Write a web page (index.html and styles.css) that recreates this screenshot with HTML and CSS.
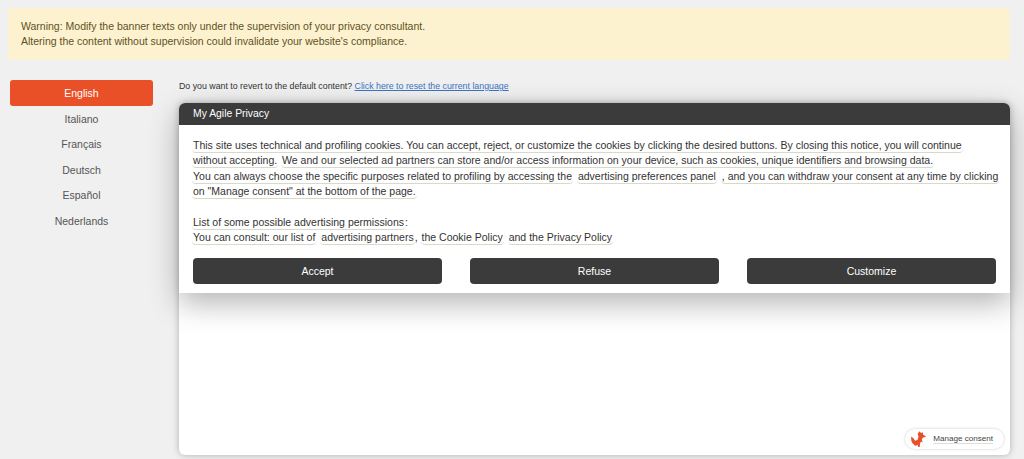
FILE: index.html
```html
<!DOCTYPE html>
<html lang="en">
<head>
<meta charset="utf-8">
<title>My Agile Privacy</title>
<link rel="stylesheet" href="styles.css">
</head>
<body>
<div class="warning">
  <p>Warning: Modify the banner texts only under the supervision of your privacy consultant.</p>
  <p>Altering the content without supervision could invalidate your website's compliance.</p>
</div>
<div class="layout">
  <nav class="langs">
    <a class="lang active">English</a>
    <a class="lang">Italiano</a>
    <a class="lang">Français</a>
    <a class="lang">Deutsch</a>
    <a class="lang">Español</a>
    <a class="lang">Nederlands</a>
  </nav>
  <main class="main">
    <p class="revert">Do you want to revert to the default content? <a href="#">Click here to reset the current language</a></p>
    <section class="preview">
      <div class="banner">
        <div class="banner-title">My Agile Privacy</div>
        <div class="banner-body">
          <div class="copy">
            <div class="line"><span class="ed">This site uses technical and profiling cookies. You can accept, reject, or customize the cookies by clicking the desired buttons. By closing this notice, you will continue</span></div>
            <div class="line"><span class="ed">without accepting.</span> <span class="ed">We and our selected ad partners can store and/or access information on your device, such as cookies, unique identifiers and browsing data.</span></div>
            <div class="line"><span class="ed">You can always choose the specific purposes related to profiling by accessing the</span> <span class="ed ml">advertising preferences panel</span> <span class="ed ml">, and you can withdraw your consent at any time by clicking</span></div>
            <div class="line"><span class="ed">on "Manage consent" at the bottom of the page.</span></div>
            <div class="line blank"></div>
            <div class="line"><span class="ed">List of some possible advertising permissions</span>:</div>
            <div class="line"><span class="ed">You can consult: our list of</span> <span class="ed ml">advertising partners</span>, <span class="ed">the Cookie Policy</span> <span class="ed ml">and the Privacy Policy</span></div>
          </div>
          <div class="actions">
            <button class="btn">Accept</button>
            <button class="btn">Refuse</button>
            <button class="btn">Customize</button>
          </div>
        </div>
      </div>
      <div class="consent">
        <svg class="fox" viewBox="0 0 20 18" aria-hidden="true">
          <path d="M11 0l2 2 2-1 .5 3 3.500 2-4 1.500-1 2.500 1 3-2-1-1.500 3 .5 3H9l.5-2-3.500 1-3-3C1.500 12 1 9 1.500 6L4 8l2 3 3-1 1-4-1-3z" fill="#e8502a"/>
        </svg>
        <span class="consent-label">Manage consent</span>
      </div>
    </section>
  </main>
</div>
</body>
</html>
```
FILE: styles.css
```css
* { box-sizing: border-box; }
html, body { height: 100%; }
body {
  margin: 0;
  height: 459px;
  overflow: hidden;
  background: #f0f0f0;
  color: #333;
  font-family: "Liberation Sans", Arial, sans-serif;
  padding: 8px 14px 0 8px;
}
p { margin: 0; }
.warning {
  height: 52px;
  padding: 11px 13px;
  background: #fdf2d0;
  border-radius: 4px;
  color: #5f5122;
  font-size: 10.5px;
  line-height: 15px;
}
.layout { display: flex; margin-top: 20px; align-items: flex-start; }
.langs { width: 145px; padding-left: 2px; flex: none; }
.lang {
  display: block;
  height: 25.6px;
  line-height: 26px;
  text-align: center;
  font-size: 10.5px;
  color: #555;
  border-radius: 3px;
}
.lang.active { background: #e95028; color: #fff; }
.main { margin-left: 26px; flex: 1; min-width: 0; }
.revert { font-size: 8.8px; line-height: 12px; color: #333; margin-bottom: 11px; }
.revert a { color: #3a74c4; }
.preview {
  position: relative;
  height: 352px;
  background: #fff;
  border-radius: 6px;
  box-shadow: 0 0 7px rgba(0,0,0,.28);
}
.banner {
  background: #fff;
  border-radius: 6px 6px 0 0;
  box-shadow: 0 10px 30px rgba(0,0,0,.3);
}
.banner-title {
  height: 22px;
  padding: 0 14px;
  line-height: 22px;
  background: #3b3b3b;
  color: #fff;
  font-size: 10.4px;
  border-radius: 6px 6px 0 0;
}
.banner-body { padding: 13px 14px 10px 13px; height: 168px; }
.copy { font-size: 10.53px; line-height: 15.4px; color: #333; white-space: nowrap; }
.line { height: 15.4px; }
.ed { border-bottom: 1px solid #d9d9c8; border-radius: 0 0 4px 4px; padding: 0 1px 1px 1px; }
.ml { margin-left: 1px; }
.actions { display: flex; justify-content: space-between; margin-top: 12px; padding-left: 1px; }
.btn {
  width: 249px;
  height: 26px;
  border: 0;
  border-radius: 4px;
  background: #3b3b3b;
  color: #fff;
  font: 10.5px "Liberation Sans", Arial, sans-serif;
}
.consent {
  position: absolute;
  right: 6px;
  bottom: 6px;
  display: flex;
  align-items: center;
  gap: 6px;
  height: 20px;
  padding: 0 11px 0 5px;
  background: #fff;
  border-radius: 10px;
  box-shadow: 0 0 3px rgba(0,0,0,.2);
}
.fox { display: block; width: 17px; height: 16px; }
.consent-label { font-size: 8.1px; color: #444; border-bottom: 1px solid #ddd; }
```
